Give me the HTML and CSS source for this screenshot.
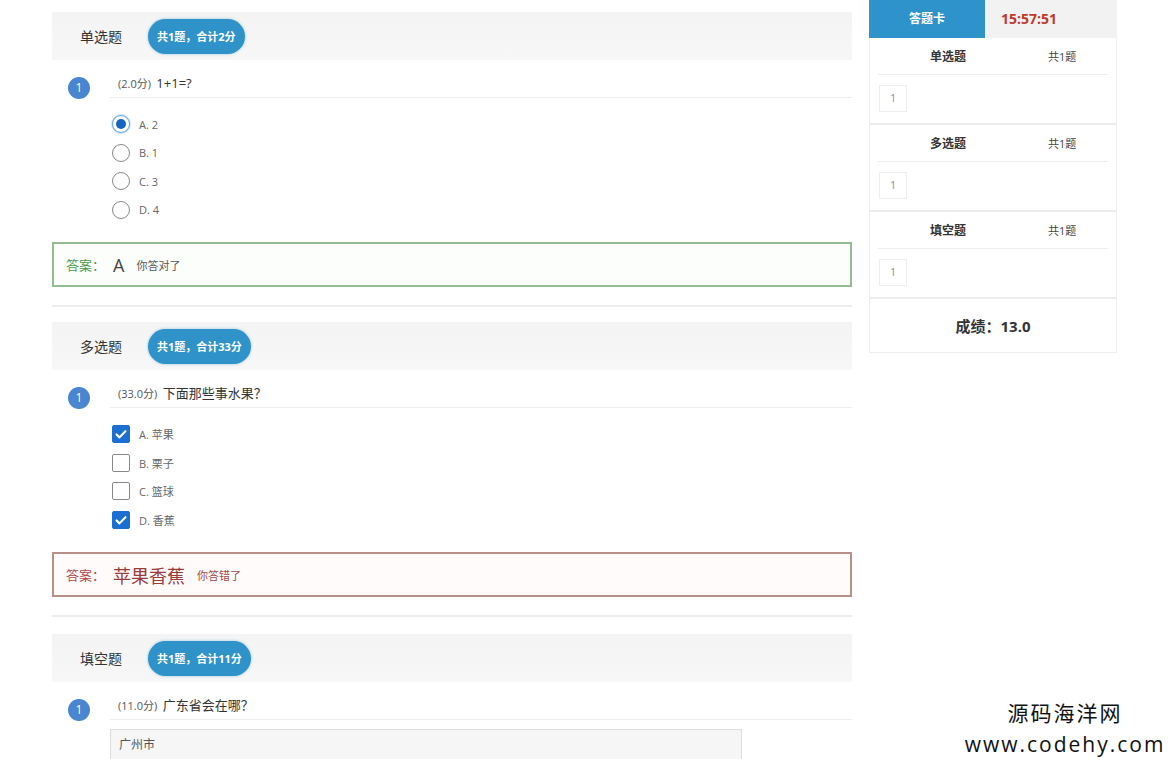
FILE: index.html
```html
<!DOCTYPE html>
<html lang="zh-CN">
<head>
    <meta charset="UTF-8">
    <title>在线考试 - 成绩</title>
    <link rel="stylesheet" href="styles.css">
</head>
<body>
    <div class="page">
        <div class="paper">
            <!-- 单选题 -->
            <div class="section">
                <div class="section-head">
                    <span class="section-title">单选题</span>
                    <span class="badge">共1题，合计2分</span>
                </div>
                <div class="q-row">
                    <span class="q-num">1</span>
                    <div class="q-title"><span class="q-score">(2.0分)</span> 1+1=?</div>
                </div>
                <div class="options">
                    <div class="option"><span class="radio on"></span>A. 2</div>
                    <div class="option"><span class="radio"></span>B. 1</div>
                    <div class="option"><span class="radio"></span>C. 3</div>
                    <div class="option"><span class="radio"></span>D. 4</div>
                </div>
                <div class="answer right">
                    <span class="answer-label">答案：</span>
                    <span class="answer-value">A</span>
                    <span class="answer-note">你答对了</span>
                </div>
            </div>

            <!-- 多选题 -->
            <div class="section">
                <div class="section-head">
                    <span class="section-title">多选题</span>
                    <span class="badge">共1题，合计33分</span>
                </div>
                <div class="q-row">
                    <span class="q-num">1</span>
                    <div class="q-title"><span class="q-score">(33.0分)</span> 下面那些事水果？</div>
                </div>
                <div class="options">
                    <div class="option"><span class="check on"><svg viewBox="0 0 18 18"><path d="M4 9.5l3.3 3.3L14 5.8" fill="none" stroke="#fff" stroke-width="2.4" stroke-linecap="round" stroke-linejoin="round"/></svg></span>A. 苹果</div>
                    <div class="option"><span class="check"></span>B. 栗子</div>
                    <div class="option"><span class="check"></span>C. 篮球</div>
                    <div class="option"><span class="check on"><svg viewBox="0 0 18 18"><path d="M4 9.5l3.3 3.3L14 5.8" fill="none" stroke="#fff" stroke-width="2.4" stroke-linecap="round" stroke-linejoin="round"/></svg></span>D. 香蕉</div>
                </div>
                <div class="answer wrong">
                    <span class="answer-label">答案：</span>
                    <span class="answer-value">苹果香蕉</span>
                    <span class="answer-note">你答错了</span>
                </div>
            </div>

            <!-- 填空题 -->
            <div class="section last">
                <div class="section-head">
                    <span class="section-title">填空题</span>
                    <span class="badge">共1题，合计11分</span>
                </div>
                <div class="q-row">
                    <span class="q-num">1</span>
                    <div class="q-title"><span class="q-score">(11.0分)</span> 广东省会在哪？</div>
                </div>
                <div class="blank">广州市</div>
            </div>
        </div>

        <div class="card">
            <div class="card-tabs">
                <div class="tab-active">答题卡</div>
                <div class="timer">15:57:51</div>
            </div>
            <div class="card-body">
                <div class="group">
                    <div class="group-head">
                        <span class="group-title">单选题</span>
                        <span class="group-count">共1题</span>
                    </div>
                    <div class="group-items"><span class="item">1</span></div>
                </div>
                <div class="group">
                    <div class="group-head">
                        <span class="group-title">多选题</span>
                        <span class="group-count">共1题</span>
                    </div>
                    <div class="group-items"><span class="item">1</span></div>
                </div>
                <div class="group">
                    <div class="group-head">
                        <span class="group-title">填空题</span>
                        <span class="group-count">共1题</span>
                    </div>
                    <div class="group-items"><span class="item">1</span></div>
                </div>
                <div class="score">成绩：13.0</div>
            </div>
        </div>
    </div>

    <div class="watermark">源码海洋网<br>www.codehy.com</div>
</body>
</html>
```

FILE: styles.css
```css
body {
    margin: 0;
    background: #fff;
    font-family: "Open Sans", "Noto Sans CJK SC", sans-serif;
    color: #333;
    overflow: hidden;
}

.page {
    display: flex;
    align-items: flex-start;
    gap: 17px;
    padding-left: 52px;
}

/* left: paper */
.paper {
    width: 800px;
    padding-top: 12px;
}

.section {
    padding-bottom: 18px;
    border-bottom: 2px solid #ececec;
}

.section + .section {
    margin-top: 15px;
}

.section + .section.last {
    margin-top: 17px;
}

.section.last {
    border-bottom: none;
}

.section-head {
    height: 48px;
    display: flex;
    align-items: center;
    padding-left: 28px;
    background: linear-gradient(#f4f4f4, #f7f7f7);
}

.section-title {
    font-size: 14px;
    color: #333;
}

.badge {
    margin-left: 26px;
    height: 35px;
    line-height: 35px;
    padding: 0 9px;
    border-radius: 18px;
    background: #2f93c9;
    color: #fff;
    font-size: 11px;
    font-weight: bold;
    box-shadow: 0 0 3px rgba(47,147,201,0.5);
}

.q-row {
    display: flex;
    height: 38px;
}

.q-num {
    margin: 17px 0 0 16px;
    width: 22px;
    height: 22px;
    border-radius: 50%;
    background: #4a86d0;
    color: #fff;
    font-size: 12px;
    line-height: 22px;
    text-align: center;
}

.q-title {
    flex: 1;
    margin-left: 20px;
    padding: 14px 0 0 8px;
    line-height: 18px;
    font-size: 13px;
    color: #333;
    border-bottom: 1px solid #eee;
}

.q-score {
    font-size: 11px;
    color: #555;
    margin-right: 2px;
}

.options {
    padding: 12px 0 0 60px;
}

.option {
    height: 28.5px;
    display: flex;
    align-items: center;
    gap: 9px;
    font-size: 11px;
    color: #666;
}

.radio {
    width: 16px;
    height: 16px;
    border: 1px solid #888;
    border-radius: 50%;
    background: #fff;
    position: relative;
}

.radio.on {
    border-color: #6aa6e6;
    box-shadow: 0 0 2px #6aa6e6;
}

.radio.on::after {
    content: "";
    position: absolute;
    left: 3px;
    top: 3px;
    width: 10px;
    height: 10px;
    border-radius: 50%;
    background: #1565c0;
}

.check {
    width: 16px;
    height: 16px;
    border: 1px solid #888;
    border-radius: 2px;
    background: #fff;
}

.check.on {
    background: #1a6fd0;
    border-color: #1a6fd0;
}

.check svg {
    display: block;
    width: 16px;
    height: 16px;
}

.answer {
    margin-top: 18px;
    height: 41px;
    display: flex;
    align-items: center;
    padding-left: 12px;
    border: 2px solid #999;
}

.answer.right {
    border-color: #94bd94;
    background: #fcfefc;
}

.answer.wrong {
    border-color: #b89088;
    background: #fffbfa;
}

.answer-label {
    font-size: 13px;
}

.answer-value {
    margin-left: 8px;
    font-size: 18px;
}

.answer-note {
    margin-left: 12px;
    font-size: 11px;
}

.right .answer-label { color: #4a9a4a; }
.right .answer-value { color: #444; }
.right .answer-note { color: #555; }

.wrong .answer-label { color: #b04848; }
.wrong .answer-value { color: #9a3a3a; }
.wrong .answer-note { color: #a04848; }

.blank {
    margin: 9px 0 0 58px;
    width: 622px;
    height: 30px;
    line-height: 30px;
    padding-left: 8px;
    background: #f6f6f6;
    border: 1px solid #ddd;
    font-size: 12px;
    color: #555;
}

/* right: answer card */
.card {
    width: 248px;
}

.card-tabs {
    display: flex;
    height: 38px;
}

.tab-active {
    width: 116px;
    background: #2f93cb;
    color: #fff;
    font-size: 12px;
    font-weight: bold;
    line-height: 38px;
    text-align: center;
}

.timer {
    flex: 1;
    background: #f2f2f2;
    color: #c0392b;
    font-size: 14px;
    font-weight: bold;
    line-height: 38px;
    padding-left: 16px;
}

.card-body {
    border: 1px solid #eee;
    border-top: none;
}

.group {
    padding: 0 8px;
    border-bottom: 2px solid #ececec;
}

.group-head {
    height: 36px;
    display: flex;
    align-items: center;
    border-bottom: 1px solid #eee;
}

.group-title {
    width: 140px;
    text-align: center;
    font-size: 12px;
    font-weight: bold;
}

.group-count {
    padding-left: 30px;
    font-size: 11px;
    color: #444;
}

.group-items {
    padding: 10px 0 11px 1px;
    display: flex;
}

.item {
    width: 26px;
    height: 25px;
    line-height: 25px;
    border: 1px solid #eee;
    text-align: center;
    font-size: 10px;
    color: #888;
}

.score {
    height: 53px;
    display: flex;
    align-items: center;
    justify-content: center;
    font-size: 15px;
    font-weight: bold;
    color: #333;
}

/* watermark overlay */
.watermark {
    position: absolute;
    left: 962px;
    top: 698px;
    width: 206px;
    text-align: center;
    color: #111;
    font-size: 21px;
    line-height: 31px;
    letter-spacing: 2px;
}
```
